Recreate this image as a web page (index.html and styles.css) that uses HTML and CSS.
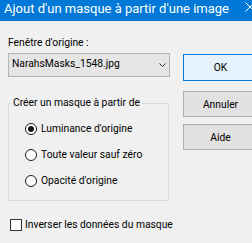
FILE: index.html
```html
<!DOCTYPE html>
<html lang="fr">
<head>
<meta charset="UTF-8" />
<meta name="viewport" content="width=device-width, initial-scale=1" />
<title>Ajout d'un masque à partir d'une image</title>
<link rel="stylesheet" href="styles.css">
</head>
<body>
<div class="dialog">
    <div class="titlebar">
        <span class="title">Ajout d'un masque à partir d'une image</span>
        <svg class="close" width="10" height="10" viewBox="0 0 10 10">
            <path d="M0.5 0.5 L9.5 9.5 M9.5 0.5 L0.5 9.5" stroke="#fff" stroke-width="1" fill="none" />
        </svg>
    </div>
    <div class="content">
        <div class="left">
            <div class="label">Fenêtre d'origine :</div>
            <div class="combo">
                <span>NarahsMasks_1548.jpg</span>
                <svg width="7" height="4" viewBox="0 0 7 4">
                    <path d="M0.5 0.5 L3.5 3.5 L6.5 0.5" stroke="#333" stroke-width="1" fill="none" />
                </svg>
            </div>
            <fieldset class="group">
                <legend>Créer un masque à partir de</legend>
                <div class="radio checked"><span class="dot"></span>Luminance d'origine</div>
                <div class="radio"><span class="dot"></span>Toute valeur sauf zéro</div>
                <div class="radio"><span class="dot"></span>Opacité d'origine</div>
            </fieldset>
            <div class="check"><span class="box"></span>Inverser les données du masque</div>
        </div>
        <div class="buttons">
            <button class="btn default">OK</button>
            <button class="btn cancel">Annuler</button>
            <button class="btn help">Aide</button>
        </div>
    </div>
</div>
</body>
</html>
```

FILE: styles.css
```css
body { margin: 0; font-family: Roboto, sans-serif; font-size: 10.3px; color: #000; }
.dialog { width: 252px; height: 243px; background: #f0f0f0; overflow: hidden; }
.titlebar { height: 21px; box-sizing: border-box; background: #0078d7; color: #fff; display: flex; align-items: flex-start; padding: 1px 0 0 4px; font-size: 13px; line-height: 15px; }
.title { white-space: nowrap; }
.close { flex-shrink: 0; margin: 1px -3px 0 auto; }
.content { display: flex; gap: 13px; padding: 14px 0 0 8px; }
.left { width: 162px; flex-shrink: 0; }
.label { line-height: 15px; margin-bottom: 3px; white-space: nowrap; }
.combo { height: 20px; border: 1px solid #b4b4b4; background: #e5e5e5; display: flex; align-items: center; justify-content: space-between; padding: 0 3px 2px 3px; line-height: 14px; white-space: nowrap; }
.combo svg { margin-top: 2px; }
.group { margin: 19px 0 0; padding: 6px 0 6px 2px; border: 1px solid #dcdcdc; width: 161px; box-sizing: border-box; min-width: 0; }
.group legend { padding: 0 2px; line-height: 14px; white-space: nowrap; }
.radio { display: flex; align-items: center; height: 26px; padding-left: 14px; line-height: 14px; white-space: nowrap; }
.dot { width: 10px; height: 10px; border: 1px solid #1a1a1a; border-radius: 50%; margin-right: 4px; position: relative; background: #fff; flex-shrink: 0; }
.checked .dot::after { content: ""; position: absolute; left: 2px; top: 2px; width: 6px; height: 6px; border-radius: 50%; background: #1a1a1a; }
.check { display: flex; align-items: center; margin-top: 17px; padding-left: 2px; line-height: 14px; white-space: nowrap; }
.box { width: 10px; height: 10px; border: 1px solid #333; background: #fff; margin-right: 3px; flex-shrink: 0; }
.buttons { display: flex; flex-direction: column; flex-shrink: 0; }
.btn { width: 75px; height: 26px; border: 1px solid #adadad; background: #e1e1e1; font-family: inherit; font-size: 10.3px; color: #000; padding: 0; flex-shrink: 0; }
.btn.default { background: #e5f1fb; border-color: #0078d7; height: 27px; margin-top: 19px; }
.btn.cancel { margin-top: 10px; }
.btn.help { margin-top: 7px; }
```
